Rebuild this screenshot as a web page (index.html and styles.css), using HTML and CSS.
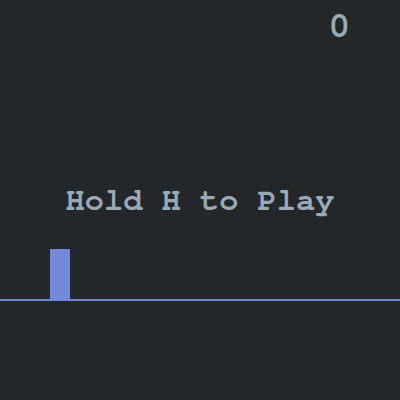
FILE: index.html
```html
<!DOCTYPE html>
<html>
<head>
<meta charset="utf-8">
<link rel="stylesheet" href="styles.css">
</head>
<body>
<div class="game">
  <div class="score">0</div>
  <div class="message">Hold H to Play</div>
  <div class="stage"><div class="player"></div></div>
  <div class="ground"></div>
</div>
</body>
</html>
```
FILE: styles.css
```css
html, body {
  margin: 0;
  padding: 0;
  background: #23272a;
}
.game {
  width: 400px;
  height: 400px;
  display: flex;
  flex-direction: column;
  background: #23272a;
  color: #99aab5;
  font-family: "TeX Gyre Cursor", "Liberation Mono", monospace;
  font-weight: bold;
}
.score {
  font-size: 36px;
  line-height: 46px;
  height: 46px;
  padding: 0 50px 0 0;
  text-align: right;
}
.message {
  font-size: 32px;
  line-height: 40px;
  height: 40px;
  margin-top: 132px;
  text-align: center;
}
.stage {
  margin-top: 31px;
  padding-left: 50px;
  height: 50px;
}
.player {
  width: 20px;
  height: 50px;
  background: #7289da;
}
.ground {
  height: 2px;
  background: #7289da;
}
```
